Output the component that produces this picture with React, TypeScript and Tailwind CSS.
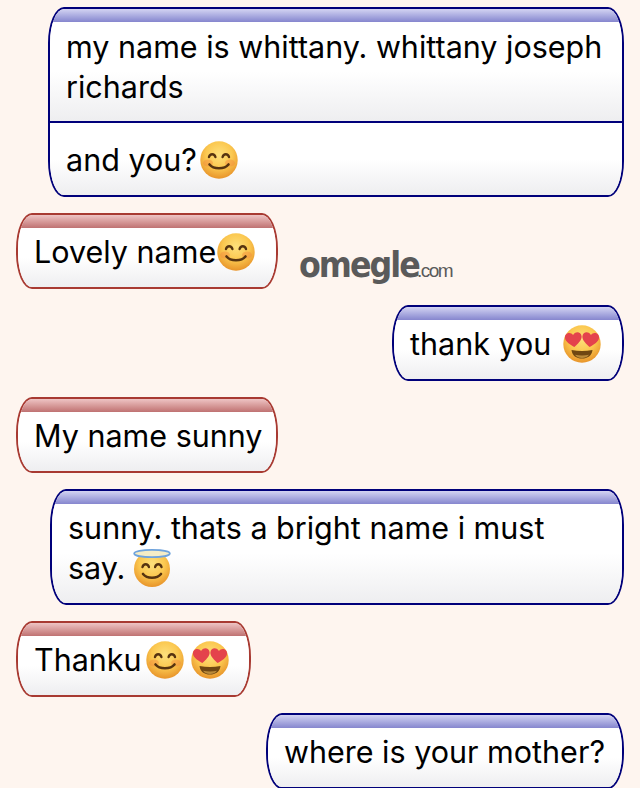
import React from "react";

function FaceDefs({ id }: { id: string }) {
  return (
    <defs>
      <radialGradient id={id} cx="50%" cy="36%" r="64%">
        <stop offset="0%" stopColor="#fde07c" />
        <stop offset="55%" stopColor="#fbc850" />
        <stop offset="100%" stopColor="#e8942a" />
      </radialGradient>
    </defs>
  );
}

function Smile({ id }: { id: string }) {
  return (
    <svg viewBox="0 0 38 38" className="inline-block h-[38px] w-[38px] shrink-0">
      <FaceDefs id={id} />
      <circle cx="19" cy="19" r="18.7" fill={`url(#${id})`} />
      <ellipse cx="8" cy="22" rx="5" ry="3.5" fill="#f28a3e" opacity="0.45" />
      <ellipse cx="30" cy="22" rx="5" ry="3.5" fill="#f28a3e" opacity="0.45" />
      <path d="M9 16c1-3.6 5.4-3.6 6.4 0" fill="none" stroke="#573410" strokeWidth="2.4" strokeLinecap="round" />
      <path d="M22.6 16c1-3.6 5.4-3.6 6.4 0" fill="none" stroke="#573410" strokeWidth="2.4" strokeLinecap="round" />
      <path d="M9.5 23.5c4 5 15 5 19 0" fill="none" stroke="#573410" strokeWidth="2.6" strokeLinecap="round" />
    </svg>
  );
}

function Hearts({ id }: { id: string }) {
  const heart = "M0 -3.6C-1.6 -7 -7.6 -6.6 -7.6 -1.8C-7.6 2 -3 4.8 0 7.4C3 4.8 7.6 2 7.6 -1.8C7.6 -6.6 1.6 -7 0 -3.6Z";
  return (
    <svg viewBox="0 0 38 38" className="inline-block h-[38px] w-[38px] shrink-0">
      <FaceDefs id={id} />
      <circle cx="19" cy="19" r="18.7" fill={`url(#${id})`} />
      <path d={heart} transform="translate(10.500 14) rotate(-6) scale(1.100)" fill="#e4434c" />
      <path d={heart} transform="translate(27.500 14) rotate(6) scale(1.100)" fill="#e4434c" />
      <path d="M8.500 25c7 1.400 14 1.400 21 0c-0.600 5.600-5 8.600-10.500 8.600S9.100 30.600 8.500 25Z" fill="#6f4712" />
      <path d="M12 29.800c4.500 1 9.500 1 14 0c-1.600 2.400-4 3.200-7 3.200s-5.400-.8-7-3.200Z" fill="#b98a3a" />
    </svg>
  );
}

function Halo({ id }: { id: string }) {
  return (
    <svg viewBox="0 0 38 38" className="inline-block h-[38px] w-[38px] shrink-0">
      <FaceDefs id={id} />
      <circle cx="19" cy="20" r="18" fill={`url(#${id})`} />
      <ellipse cx="19" cy="4.500" rx="17.800" ry="3.600" fill="#f5edc6" stroke="#6fa3dc" strokeWidth="1.800" />
      <path d="M9.500 18c1-3.600 5.400-3.600 6.400 0" fill="none" stroke="#573410" strokeWidth="2.400" strokeLinecap="round" />
      <path d="M22.100 18c1-3.600 5.400-3.600 6.400 0" fill="none" stroke="#573410" strokeWidth="2.400" strokeLinecap="round" />
      <path d="M10 25c4 5 14 5 18 0" fill="none" stroke="#573410" strokeWidth="2.600" strokeLinecap="round" />
    </svg>
  );
}

function Bubble({
  who,
  sections,
  className,
  first,
}: {
  who: "me" | "them";
  sections: React.ReactNode[];
  className: string;
  first?: boolean;
}) {
  const me = who === "me";
  return (
    <div
      className={`shrink-0 overflow-hidden rounded-[16px/36px] border-2 ${me ? "border-[#00007a]" : "border-[#a83a32]"} ${className}`}
    >
      <div
        className={`h-[13px] bg-gradient-to-b ${
          me ? "from-[#d4d4f2] to-[#8686ce]" : "from-[#eec4c4] to-[#bf7272]"
        }`}
      />
      {sections.map((s, i) => (
        <div
          key={i}
          className={`bg-gradient-to-b from-white from-50% to-[#eeeef0] pl-[16px] pr-[14px] ${
            i === 0
              ? first
                ? "pb-[14px] pt-[5px]"
                : "pb-[15px] pt-[4px]"
              : `border-t-2 pb-[15px] pt-[17px] ${me ? "border-[#00007a]" : "border-[#a83a32]"}`
          }`}
        >
          {s}
        </div>
      ))}
    </div>
  );
}

export default function App() {
  return (
    <div
      className="flex h-[788px] flex-col gap-[16px] overflow-hidden bg-[#fef5ef] pl-[16px] pr-[16px] pt-[7px] text-[30.5px] leading-[40px] text-black"
      style={{ fontFamily: 'Inter, "Liberation Sans", sans-serif' }}
    >
      <Bubble
        who="me"
        first
        className="ml-[32px]"
        sections={[
          <>my name is whittany. whittany joseph richards</>,
          <span className="flex items-center gap-[3px]">
            and you?
            <Smile id="s1" />
          </span>,
        ]}
      />
      <div className="flex items-end gap-[21px]">
        <Bubble
          who="them"
          className="w-[262px]"
          sections={[
            <span className="flex items-center gap-[1px]">
              Lovely name
              <Smile id="s2" />
            </span>,
          ]}
        />
        <div className="mb-[2px] flex items-baseline text-[#5a5a5a]">
          <span
            className="block w-[118px] origin-left scale-x-[0.98] whitespace-nowrap text-[36px] font-bold leading-[44px] tracking-[-2px]"
            style={{ fontFamily: '"DejaVu Sans Condensed", "DejaVu Sans", sans-serif' }}
          >
            omegle
          </span>
          <span
            className="text-[19px] font-medium leading-[20px] tracking-[-1.500px]"
            style={{ fontFamily: '"Liberation Sans", sans-serif' }}
          >
            .com
          </span>
        </div>
      </div>
      <Bubble
        who="me"
        className="w-[232px] self-end"
        sections={[
          <span className="flex items-center gap-[12px]">
            thank you
            <Hearts id="h1" />
          </span>,
        ]}
      />
      <Bubble who="them" className="w-[262px]" sections={[<span className="whitespace-nowrap">My name sunny</span>]} />
      <Bubble
        who="me"
        className="ml-[34px]"
        sections={[
          <>
            sunny. thats a bright name i must
            <span className="flex h-[40px] items-center gap-[8px]">
              say.
              <Halo id="a1" />
            </span>
          </>,
        ]}
      />
      <Bubble
        who="them"
        className="w-[235px]"
        sections={[
          <span className="flex items-center gap-[4px]">
            Thanku
            <Smile id="s3" />
            <span className="ml-[3px] flex">
              <Hearts id="h2" />
            </span>
          </span>,
        ]}
      />
      <Bubble
        who="me"
        className="w-[358px] self-end"
        sections={[<span className="whitespace-nowrap">where is your mother?</span>]}
      />
    </div>
  );
}
